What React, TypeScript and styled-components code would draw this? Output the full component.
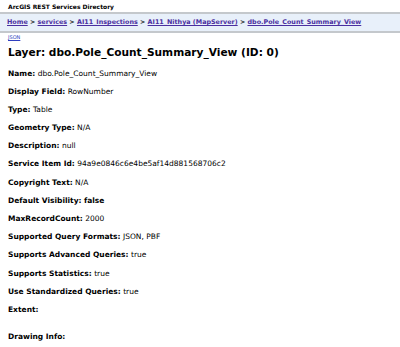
import styled, { createGlobalStyle } from 'styled-components'

const GlobalStyle = createGlobalStyle`
  html, body {
    margin: 0;
    padding: 0;
    background: #fff;
  }
  body {
    font-family: "DejaVu Sans", Verdana, sans-serif;
    font-size: 7.5px;
    color: #000;
  }
`

type Field = {
  label: string
  value?: string
  bold?: boolean
}

const fields: Field[] = [
  { label: 'Name:', value: 'dbo.Pole_Count_Summary_View' },
  { label: 'Display Field:', value: 'RowNumber' },
  { label: 'Type:', value: 'Table' },
  { label: 'Geometry Type:', value: 'N/A' },
  { label: 'Description:', value: 'null' },
  { label: 'Service Item Id:', value: '94a9e0846c6e4be5af14d881568706c2' },
  { label: 'Copyright Text:', value: 'N/A' },
  { label: 'Default Visibility:', value: 'false', bold: true },
  { label: 'MaxRecordCount:', value: '2000' },
  { label: 'Supported Query Formats:', value: 'JSON, PBF' },
  { label: 'Supports Advanced Queries:', value: 'true' },
  { label: 'Supports Statistics:', value: 'true' },
  { label: 'Use Standardized Queries:', value: 'true' }
]

const crumbs = ['Home', 'services', 'AI11_Inspections', 'AI11_Nithya (MapServer)', 'dbo.Pole_Count_Summary_View']

export default function App (): JSX.Element {
  return <Page>
    <GlobalStyle />
    <SiteTitle>ArcGIS REST Services Directory</SiteTitle>
    <Breadcrumbs>
      {crumbs.map((c, i) => <span key={c}>
        <CrumbLink href='#'>{c}</CrumbLink>
        {i < crumbs.length - 1 && <Sep> &gt; </Sep>}
      </span>)}
    </Breadcrumbs>
    <Content>
      <JsonLink href='#'>JSON</JsonLink>
      <Heading>Layer: dbo.Pole_Count_Summary_View (ID: 0)</Heading>
      {fields.map(f => <Row key={f.label}>
        <Label>{f.label}</Label> <Value $bold={f.bold}>{f.value}</Value>
      </Row>)}
      <Row $gap={18}><Label>Extent:</Label></Row>
      <Row><Label>Drawing Info:</Label></Row>
    </Content>
  </Page>
}

const Page = styled.div`
  width: 400px;
  height: 347px;
  overflow: hidden;
`

const SiteTitle = styled.div`
  font-weight: bold;
  font-size: 6px;
  padding: 2px 8px 0;
  height: 10px;
  line-height: 9px;
`

const Breadcrumbs = styled.div`
  background: #e8f0fa;
  border-top: 2px solid #c4c8cc;
  border-bottom: 2px solid #c4c8cc;
  height: 17px;
  line-height: 17px;
  padding: 0 7px;
  white-space: nowrap;
  font-weight: bold;
  font-size: 6.4px;
`

const CrumbLink = styled.a`
  color: #4a2fa0;
  text-decoration: underline;
`

const Sep = styled.span`
  color: #000;
`

const Content = styled.div`
  padding: 0 8px;
`

const JsonLink = styled.a`
  display: block;
  margin-top: 0;
  font-size: 5px;
  line-height: 8px;
  color: #2f3fc0;
  text-decoration: underline;
`

const Heading = styled.h2`
  margin: 5px 0 9.5px;
  font-size: 10.6px;
  line-height: 13px;
  font-weight: bold;
`

const Row = styled.div<{ $gap?: number }>`
  line-height: 9.1px;
  height: 9.1px;
  margin-bottom: ${p => p.$gap ?? 9.1}px;
  white-space: nowrap;
`

const Label = styled.b`
  font-weight: bold;
`

const Value = styled.span<{ $bold?: boolean }>`
  font-weight: ${p => (p.$bold ? 'bold' : 'normal')};
`
